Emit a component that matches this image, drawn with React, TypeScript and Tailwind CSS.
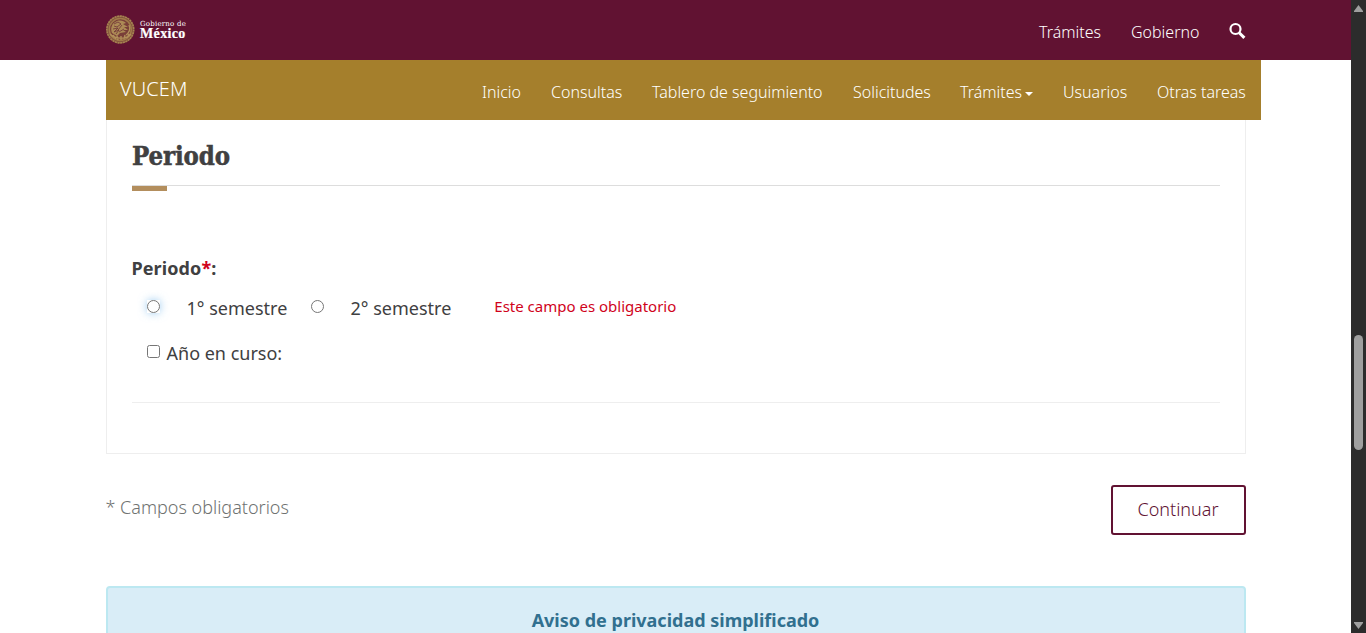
import React from 'react';

type NavItem = { label: string; width: string; caret?: boolean };

const navItems: NavItem[] = [
  { label: 'Inicio', width: 'w-[39px]' },
  { label: 'Consultas', width: 'w-[71px]' },
  { label: 'Tablero de seguimiento', width: 'w-[171px]' },
  { label: 'Solicitudes', width: 'w-[77px]' },
  { label: 'Trámites', width: 'w-[73px]', caret: true },
  { label: 'Usuarios', width: 'w-[64px]' },
  { label: 'Otras tareas', width: 'w-[89px]' },
];

function Emblem() {
  return (
    <svg className="h-[30px] w-[30px]" viewBox="0 0 30 30" fill="none">
      <circle cx="15.3" cy="15.5" r="13.4" fill="#83523d" stroke="#a58350" strokeWidth="1.7" strokeDasharray="2.2 .5" />
      <circle cx="15.3" cy="15.5" r="11" fill="#793f38" stroke="#a07b4a" strokeWidth="1.5" />
      <path d="M7 19c-2-5 0-10 5-12 4-1 7 0 9 2l-3 1 5 3-4 0 4 3-5 0 3 2-6 1-3 3z" fill="#ac8a55" />
      <path d="M9 10l4-2 3 2-4 3-3-1M8 15l5-1-4 4 5-2-3 4M17 11l-4 5M19 15l-5 3" stroke="#703339" strokeWidth=".8" />
      <path d="M5 20c4 5 16 6 21 0M8 21l3 4M12 22l1 4M16 22v4M20 21l-1 4M24 20l-2 4M24 11c2 4 0 8-3 10" stroke="#b18f5a" strokeWidth="1.4" />
    </svg>
  );
}

function GovernmentBar() {
  return (
    <header className="h-[60px] bg-[#611232] pl-[105px]">
      <div className="flex h-full w-[1141px] items-start justify-between">
        <div className="flex pt-[14px] text-white">
          <Emblem />
          <div className="flex flex-col pl-[5px] pt-[6px] font-['Liberation_Serif',serif] font-bold">
            <span className="whitespace-nowrap font-['DejaVu_Serif',serif] text-[7px] font-normal leading-[8px] tracking-[0.22px]">Gobierno de</span>
            <span className="text-[14px] leading-[11px] tracking-[0.35px] [-webkit-text-stroke:0.2px_white]">México</span>
          </div>
        </div>
        <nav className="flex items-start pt-5 text-[16px] font-light leading-6 text-white">
          <a className="w-[92px]">Trámites</a>
          <a className="w-[98px]">Gobierno</a>
          <svg className="mt-[2px] h-[18px] w-[17px]" viewBox="0 0 17 18" fill="none" stroke="white">
            <circle cx="6.5" cy="7" r="5" strokeWidth="2.2" />
            <path d="M10.2 10.7l5.2 5.2" strokeWidth="3" />
          </svg>
        </nav>
      </div>
    </header>
  );
}

function MainNav() {
  return (
    <div className="ml-[106px] flex h-[60px] w-[1155px] justify-between bg-[#a57f2c] pl-[14px] pr-[15px] text-white">
      <span className="pt-[14px] text-[20px] font-light leading-[30px] tracking-[0.1px]">VUCEM</span>
      <nav className="flex items-start gap-[30px] pt-5 text-[16px] font-light leading-6">
        {navItems.map((item) => (
          <a key={item.label} className={`${item.width} flex items-center whitespace-nowrap`}>
            {item.label}
            {item.caret && <span className="ml-[3px] mt-1 h-0 w-0 border-x-4 border-t-4 border-x-transparent border-t-white" />}
          </a>
        ))}
      </nav>
    </div>
  );
}

function PeriodForm() {
  return (
    <section className="h-[334px] border border-t-0 border-[#eeeeee] px-[25px] pt-[18px] text-[#404041]">
      <h3 className="h-[47px] font-['DejaVu_Serif_Condensed','DejaVu_Serif',serif] text-[25.5px] font-bold leading-[36px] tracking-[-0.1px] [-webkit-text-stroke:0.5px_#404041]">Periodo</h3>
      <div className="h-[6px] w-full border-t border-[#dddddd]">
        <div className="h-[5px] w-[35px] bg-[#b38e5d]" />
      </div>
      <p className="-ml-[0.5px] mt-[64px] text-[18px] font-bold leading-[26px] tracking-[0.1px]">
        Periodo<span className="text-[#d0021b]">*</span>:
      </p>
      <div className="mt-[14px] flex h-[27px] items-start text-[18px] leading-[27px]">
        <input aria-label="1° semestre" name="periodo" type="radio" className="ml-[15px] mt-[5px] h-[13px] w-[13px] shrink-0 rounded-full shadow-[0_0_8px_rgba(102,175,233,.6)]" />
        <label className="ml-[26.5px] w-[124.5px] shrink-0">1° semestre</label>
        <input aria-label="2° semestre" name="periodo" type="radio" className="mt-[5px] h-[13px] w-[13px] shrink-0" />
        <label className="ml-[26.5px] w-[143.8px] shrink-0">2° semestre</label>
        <span className="whitespace-nowrap text-[15px] leading-[22px] text-[#d0021b]">Este campo es obligatorio</span>
      </div>
      <div className="mt-[18px] flex h-[27px] items-start text-[18px] leading-[27px]">
        <input aria-label="Año en curso" type="checkbox" className="ml-[15px] mt-[5px] h-[13px] w-[13px] shrink-0" />
        <label className="ml-[6.5px]">Año en curso:</label>
      </div>
      <hr className="mt-[35px] border-[#eeeeee]" />
    </section>
  );
}

function ScrollRail() {
  return (
    <aside className="flex h-full w-[15px] shrink-0 flex-col items-center bg-[#2c2c2c]">
      <svg className="h-[15px] w-[15px] shrink-0" viewBox="0 0 15 15"><path d="M7.5 5L12 11v1H3v-1z" fill="#9f9f9f" /></svg>
      <div className="mt-[320px] h-[115px] w-[9px] shrink-0 rounded-full bg-[#9f9f9f]" />
      <div className="grow" />
      <svg className="h-[15px] w-[15px] shrink-0" viewBox="0 0 15 15"><path d="M3 4h9v1L7.5 11 3 5z" fill="#9f9f9f" /></svg>
    </aside>
  );
}

export default function App() {
  return (
    <div className="flex h-[633px] w-[1366px] overflow-hidden bg-white font-['Noto_Sans',sans-serif]">
      <div className="w-[1351px] shrink-0">
        <GovernmentBar />
        <MainNav />
        <main className="ml-[106px] w-[1140px]">
          <PeriodForm />
          <div className="mt-[31px] flex h-[50px] justify-between">
            <span className="-ml-[0.5px] pt-[9px] text-[18px] font-light leading-[27px] text-[#6f7271]">* Campos obligatorios</span>
            <button className="h-[50px] w-[135px] rounded-[3px] border-2 border-[#611232] pb-[2px] pr-px text-[18px] font-light text-[#611232]">Continuar</button>
          </div>
          <section className="mt-[51px] h-[100px] rounded-[4px] border-2 border-[#bce8f1] bg-[#d9edf7] pr-px pt-[19px] text-center text-[18px] font-bold leading-[27px] text-[#31708f]">Aviso de privacidad simplificado</section>
        </main>
      </div>
      <ScrollRail />
    </div>
  );
}
